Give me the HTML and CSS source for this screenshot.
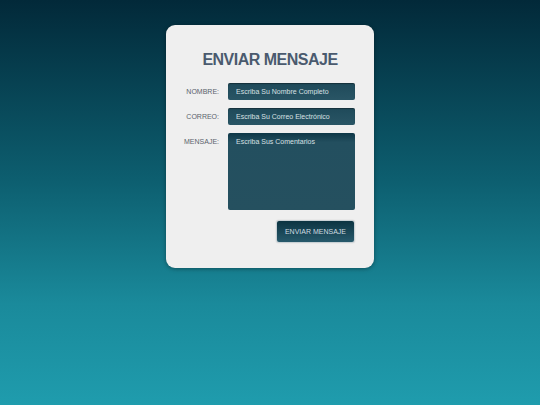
FILE: index.html
```html
<!DOCTYPE html>
<html lang="es">
<head>
<meta charset="utf-8">
<title>Enviar Mensaje</title>
<link rel="stylesheet" href="styles.css">
</head>
<body>
<div class="page">
  <form class="card">
    <h1 class="title">ENVIAR MENSAJE</h1>
    <div class="fields">
      <label class="label" for="nombre">NOMBRE:</label>
      <input class="input" id="nombre" type="text" placeholder="Escriba Su Nombre Completo">
      <label class="label" for="correo">CORREO:</label>
      <input class="input" id="correo" type="text" placeholder="Escriba Su Correo Electrónico">
      <label class="label label-top" for="mensaje">MENSAJE:</label>
      <textarea class="textarea" id="mensaje" placeholder="Escriba Sus Comentarios"></textarea>
      <div></div>
      <div class="actions"><button class="button" type="button">ENVIAR MENSAJE</button></div>
    </div>
  </form>
</div>
</body>
</html>
```

FILE: styles.css
```css
html, body {
  margin: 0;
  padding: 0;
  height: 100%;
}
body {
  background: linear-gradient(to bottom, #022939 0%, #0d5f70 45%, #1a8a9b 75%, #1f9cad 100%);
  font-family: "Liberation Sans", Arial, sans-serif;
}
.page {
  display: flex;
  justify-content: center;
  padding-top: 25px;
}
.card {
  width: 208px;
  height: 243px;
  box-sizing: border-box;
  background: #efefef;
  border-radius: 9px;
  box-shadow: 0 1px 4px rgba(0, 0, 0, 0.35);
  padding-top: 25px;
}
.title {
  margin: 0;
  text-align: center;
  font-size: 16px;
  line-height: 20px;
  font-weight: bold;
  letter-spacing: -0.5px;
  color: #4a5a6e;
}
.fields {
  display: grid;
  grid-template-columns: 53px 127px;
  column-gap: 9px;
  row-gap: 8px;
  margin-top: 13px;
  align-items: center;
}
.label {
  text-align: right;
  font-size: 7px;
  color: #5a626c;
}
.label-top {
  align-self: start;
  padding-top: 5px;
}
.input, .textarea {
  box-sizing: border-box;
  width: 127px;
  margin: 0;
  border: none;
  border-radius: 2px;
  background: linear-gradient(to bottom, #1f4a5a, #295565);
  box-shadow: inset 0 1px 1px rgba(0, 0, 0, 0.35);
  font-family: "Liberation Sans", Arial, sans-serif;
  font-size: 7px;
  color: #d6e0e4;
  padding: 0 8px;
  outline: none;
}
.input {
  height: 17px;
}
.textarea {
  height: 77px;
  padding-top: 5px;
  resize: none;
  display: block;
  background: linear-gradient(to bottom, #0e3747 0%, #234f5f 12%, #25505f 100%);
  box-shadow: none;
}
.input::placeholder, .textarea::placeholder {
  color: #d8e0e4;
  opacity: 1;
}
.actions {
  display: flex;
  justify-content: flex-end;
  padding-top: 2px;
}
.button {
  width: 79px;
  height: 23px;
  border: 1px solid #c9d1d5;
  border-radius: 3px;
  background: linear-gradient(to bottom, #0c3442, #27596b);
  color: #d0dce1;
  font-family: "Liberation Sans", Arial, sans-serif;
  font-size: 7px;
  padding: 0;
  box-shadow: 0 0 1px rgba(0, 0, 0, 0.3);
}
```
